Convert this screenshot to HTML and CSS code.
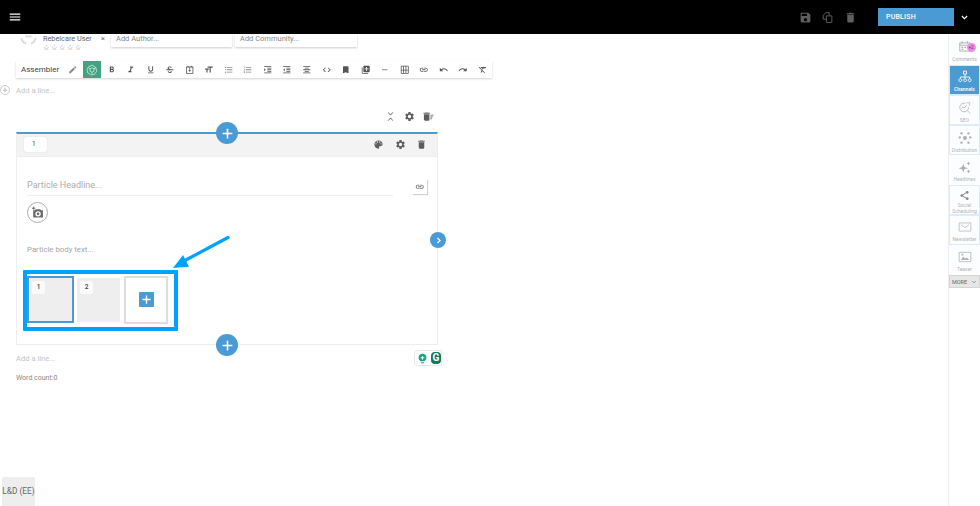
FILE: index.html
```html
<!DOCTYPE html>
<html lang="en">
<head>
<meta charset="utf-8">
<title>Assembler</title>
<link rel="stylesheet" href="styles.css">
</head>
<body>
<svg class="sprite" width="0" height="0" aria-hidden="true">
  <symbol id="i-menu" viewBox="0 0 24 24"><path d="M3 18h18v-2H3v2zm0-5h18v-2H3v2zm0-7v2h18V6H3z"/></symbol>
  <symbol id="i-save" viewBox="0 0 24 24"><path d="M17 3H5c-1.11 0-2 .9-2 2v14c0 1.1.89 2 2 2h14c1.1 0 2-.9 2-2V7l-4-4zm-5 16c-1.66 0-3-1.34-3-3s1.34-3 3-3 3 1.34 3 3-1.34 3-3 3zm3-10H5V5h10v4z"/></symbol>
  <symbol id="i-delete" viewBox="0 0 24 24"><path d="M6 19c0 1.1.9 2 2 2h8c1.1 0 2-.9 2-2V7H6v12zM19 4h-3.5l-1-1h-5l-1 1H5v2h14V4z"/></symbol>
  <symbol id="i-gear" viewBox="0 0 24 24"><path d="M19.14 12.94c.04-.3.06-.61.06-.94 0-.32-.02-.64-.07-.94l2.03-1.58c.18-.14.23-.41.12-.61l-1.92-3.32c-.12-.22-.37-.29-.59-.22l-2.39.96c-.5-.38-1.03-.7-1.62-.94l-.36-2.54c-.04-.24-.24-.41-.48-.41h-3.84c-.24 0-.43.17-.47.41l-.36 2.54c-.59.24-1.13.57-1.62.94l-2.39-.96c-.22-.08-.47 0-.59.22L2.74 8.87c-.12.21-.08.47.12.61l2.03 1.58c-.05.3-.09.63-.09.94s.02.64.07.94l-2.03 1.58c-.18.14-.23.41-.12.61l1.92 3.32c.12.22.37.29.59.22l2.39-.96c.5.38 1.03.7 1.62.94l.36 2.54c.05.24.24.41.48.41h3.84c.24 0 .44-.17.47-.41l.36-2.54c.59-.24 1.13-.56 1.62-.94l2.39.96c.22.08.47 0 .59-.22l1.92-3.32c.12-.22.07-.47-.12-.61l-2.01-1.58zM12 15.6c-1.98 0-3.6-1.62-3.6-3.6s1.62-3.6 3.6-3.6 3.6 1.62 3.6 3.6-1.62 3.6-3.6 3.6z"/></symbol>
  <symbol id="i-palette" viewBox="0 0 24 24"><path d="M12 3c-4.97 0-9 4.03-9 9s4.03 9 9 9c.83 0 1.5-.67 1.5-1.5 0-.39-.15-.74-.39-1.01-.23-.26-.38-.61-.38-.99 0-.83.67-1.5 1.5-1.5H16c2.76 0 5-2.24 5-5 0-4.42-4.03-8-9-8zm-5.5 9c-.83 0-1.5-.67-1.5-1.5S5.67 9 6.5 9 8 9.67 8 10.5 7.33 12 6.5 12zm3-4C8.67 8 8 7.33 8 6.5S8.67 5 9.5 5s1.5.67 1.5 1.5S10.33 8 9.5 8zm5 0c-.83 0-1.5-.67-1.5-1.5S13.67 5 14.5 5s1.5.67 1.5 1.5S15.33 8 14.5 8zm3 4c-.83 0-1.5-.67-1.5-1.5S16.67 9 17.5 9s1.5.67 1.5 1.5-.67 1.5-1.5 1.5z"/></symbol>
  <symbol id="i-link" viewBox="0 0 24 24"><path d="M3.9 12c0-1.71 1.39-3.1 3.1-3.1h4V7H7c-2.76 0-5 2.24-5 5s2.24 5 5 5h4v-1.9H7c-1.71 0-3.1-1.39-3.1-3.1zM8 13h8v-2H8v2zm9-6h-4v1.9h4c1.71 0 3.1 1.39 3.1 3.1s-1.39 3.1-3.1 3.1h-4V17h4c2.76 0 5-2.24 5-5s-2.24-5-5-5z"/></symbol>
  <symbol id="i-edit" viewBox="0 0 24 24"><path d="M3 17.25V21h3.75L17.81 9.94l-3.75-3.75L3 17.25zM20.71 7.04a1 1 0 0 0 0-1.41l-2.34-2.34a1 1 0 0 0-1.41 0l-1.83 1.83 3.75 3.75 1.83-1.83z"/></symbol>
  <symbol id="i-bold" viewBox="0 0 24 24"><path d="M15.6 10.79c.97-.67 1.65-1.77 1.65-2.79 0-2.26-1.75-4-4-4H7v14h7.04c2.09 0 3.71-1.7 3.71-3.79 0-1.52-.86-2.82-2.15-3.42zM10 6.5h3c.83 0 1.5.67 1.5 1.5s-.67 1.5-1.5 1.5h-3v-3zm3.5 9H10v-3h3.5c.83 0 1.5.67 1.5 1.5s-.67 1.5-1.5 1.5z"/></symbol>
  <symbol id="i-italic" viewBox="0 0 24 24"><path d="M10 4v3h2.21l-3.42 8H6v3h8v-3h-2.21l3.42-8H18V4z"/></symbol>
  <symbol id="i-underline" viewBox="0 0 24 24"><path d="M12 17c3.31 0 6-2.69 6-6V3h-2.5v8c0 1.93-1.57 3.5-3.5 3.5S8.5 12.93 8.5 11V3H6v8c0 3.31 2.69 6 6 6zm-7 2v2h14v-2H5z"/></symbol>
  <symbol id="i-strike" viewBox="0 0 24 24"><path d="M17 6.500C16 4.500 14 3.500 12 3.500c-3 0-5.500 1.500-5.500 4.300 0 1.500.8 2.700 2.200 3.200H3v2h18v-2h-6.500c-2-.6-5.200-1-5.200-3.200 0-1.300 1.200-2.100 2.700-2.100 1.300 0 2.500.6 3.100 2zM7 16c.6 3 2.800 4.500 5.200 4.500 3 0 5.300-1.500 5.300-4.500h-2.700c0 1.500-1.200 2.200-2.600 2.200-1.300 0-2.500-.8-2.800-2.200z"/></symbol>
  <symbol id="i-box" viewBox="0 0 24 24"><path d="M3 4h4V2h2v2h6V2h2v2h4v18H3V4zm2 2v14h14V6H5zm6 1h2v6h3l-4 4-4-4h3V7z"/></symbol>
  <symbol id="i-size" viewBox="0 0 24 24"><path d="M9 4v3h5v12h3V7h5V4H9zm-6 8h3v7h3v-7h3V9H3v3z"/></symbol>
  <symbol id="i-ul" viewBox="0 0 24 24"><path d="M4 10.5c-.83 0-1.5.67-1.5 1.5s.67 1.5 1.5 1.5 1.5-.67 1.5-1.5-.67-1.5-1.5-1.5zm0-6c-.83 0-1.5.67-1.5 1.5S3.17 7.5 4 7.5 5.5 6.83 5.5 6 4.83 4.5 4 4.5zm0 12c-.83 0-1.5.68-1.5 1.5s.68 1.5 1.5 1.5 1.5-.68 1.5-1.5-.67-1.5-1.5-1.5zM7 19h14v-2H7v2zm0-6h14v-2H7v2zm0-8v2h14V5H7z"/></symbol>
  <symbol id="i-ol" viewBox="0 0 24 24"><path d="M2 17h2v.5H3v1h1v.5H2v1h3v-4H2v1zm1-9h1V4H2v1h1v3zm-1 3h1.8L2 13.1v.9h3v-1H3.2L5 10.9V10H2v1zm5-6v2h14V5H7zm0 14h14v-2H7v2zm0-6h14v-2H7v2z"/></symbol>
  <symbol id="i-indent" viewBox="0 0 24 24"><path d="M3 21h18v-2H3v2zM3 8v8l4-4-4-4zm8 9h10v-2H11v2zM3 3v2h18V3H3zm8 6h10V7H11v2zm0 4h10v-2H11v2z"/></symbol>
  <symbol id="i-outdent" viewBox="0 0 24 24"><path d="M11 17h10v-2H11v2zm-8-5l4 4V8l-4 4zm0 9h18v-2H3v2zM3 3v2h18V3H3zm8 6h10V7H11v2zm0 4h10v-2H11v2z"/></symbol>
  <symbol id="i-center" viewBox="0 0 24 24"><path d="M3 3h18v2H3zM3 19h18v2H3zM3 11h18v2H3zM7 7h10v2H7zM7 15h10v2H7z"/></symbol>
  <symbol id="i-code" viewBox="0 0 24 24"><path d="M9.4 16.6L4.8 12l4.6-4.6L8 6l-6 6 6 6 1.4-1.4zm5.2 0l4.6-4.6-4.6-4.6L16 6l6 6-6 6-1.4-1.4z"/></symbol>
  <symbol id="i-bookmark" viewBox="0 0 24 24"><path d="M17 3H7c-1.1 0-1.99.9-1.99 2L5 21l7-3 7 3V5c0-1.1-.9-2-2-2z"/></symbol>
  <symbol id="i-library" viewBox="0 0 24 24"><path d="M4 6H2v14c0 1.1.9 2 2 2h14v-2H4V6zm16-4H8c-1.1 0-2 .9-2 2v12c0 1.1.9 2 2 2h12c1.1 0 2-.9 2-2V4c0-1.1-.9-2-2-2zm-1 9h-4v4h-2v-4H9V9h4V5h2v4h4v2z"/></symbol>
  <symbol id="i-minus" viewBox="0 0 24 24"><path d="M19 13H5v-2h14v2z"/></symbol>
  <symbol id="i-table" viewBox="0 0 24 24"><path d="M20 2H4c-1.1 0-2 .9-2 2v16c0 1.1.9 2 2 2h16c1.1 0 2-.9 2-2V4c0-1.1-.9-2-2-2zM8 20H4v-6h4v6zm0-8H4V4h4v8zm6 8h-4v-6h4v6zm0-8h-4V4h4v8zm6 8h-4v-6h4v6zm0-8h-4V4h4v8z"/></symbol>
  <symbol id="i-undo" viewBox="0 0 24 24"><path d="M12.5 8c-2.65 0-5.05.99-6.9 2.6L2 7v9h9l-3.62-3.62c1.39-1.16 3.16-1.88 5.12-1.88 3.54 0 6.55 2.31 7.6 5.5l2.37-.78C21.08 11.03 17.15 8 12.5 8z"/></symbol>
  <symbol id="i-redo" viewBox="0 0 24 24"><path d="M18.4 10.6C16.55 8.99 14.15 8 11.5 8c-4.65 0-8.58 3.03-9.96 7.22L3.9 16c1.05-3.19 4.05-5.5 7.6-5.5 1.95 0 3.73.72 5.12 1.88L13 16h9V7l-3.6 3.6z"/></symbol>
  <symbol id="i-clear" viewBox="0 0 24 24"><path d="M3.27 5L2 6.27l6.97 6.97L6.5 19h3l1.57-3.66L16.73 21 18 19.73 3.55 5.27 3.27 5zM6 5v.18L8.82 8h2.4l-.72 1.68 2.1 2.1L14.21 8H20V5H6z"/></symbol>
  <symbol id="i-copy" viewBox="0 0 24 24"><path fill="none" stroke="currentColor" stroke-width="1.8" d="M9 15H4V8l5-5h6v5M10 9h10v12H10z"/></symbol>
  <symbol id="i-collapse" viewBox="0 0 24 24"><path fill="none" stroke="currentColor" stroke-width="2" d="M7 3l5 6 5-6M7 21l5-6 5 6"/></symbol>
  <symbol id="i-delete-list" viewBox="0 0 24 24"><path d="M2 19c0 1.1.9 2 2 2h8c1.1 0 2-.9 2-2V7H2v12zM15 4h-3.5l-1-1h-5l-1 1H1v2h14V4zM16 8h7v2h-7zM16 12h5v2h-5zM16 16h3v2h-3z"/></symbol>
  <symbol id="i-plus" viewBox="0 0 24 24"><path d="M10.5 3h3v7.500H21v3h-7.500V21h-3v-7.500H3v-3h7.500z"/></symbol>
  <symbol id="i-chev-down" viewBox="0 0 24 24"><path fill="none" stroke="currentColor" stroke-width="3" d="M5 8l7 7 7-7"/></symbol>
  <symbol id="i-chev-right" viewBox="0 0 24 24"><path fill="none" stroke="currentColor" stroke-width="3.500" d="M9 5l7 7-7 7"/></symbol>
  <symbol id="i-camera" viewBox="0 0 24 24"><path d="M9 6l-1.500 2H4v13h18V8h-3.500L17 6zm4 3.500a5 5 0 1 1 0 10 5 5 0 0 1 0-10zm0 2.500a2.500 2.500 0 1 0 0 5 2.500 2.500 0 0 0 0-5zM4 1h2v2h2v2H6v2H4V5H2V3h2z"/></symbol>
  <symbol id="i-calendar" viewBox="0 0 24 24"><path fill="none" stroke="currentColor" stroke-width="1.600" d="M3 5h18v14H3zM3 9h18M7 2v4M16 2v4"/><path d="M6 11.500h3v2H6zM11 11.500h3v2h-3zM6 15h3v2H6z"/></symbol>
  <symbol id="i-channels" viewBox="0 0 24 24"><path fill="none" stroke="currentColor" stroke-width="1.500" d="M9.500 2h5v5h-5zM12 7v5M4 12h16v3M4 12v3M12 12v3M4 15a2.500 2.500 0 1 0 .01 0zM12 15a2.500 2.500 0 1 0 .01 0zM20 15a2.500 2.500 0 1 0 .01 0z"/></symbol>
  <symbol id="i-seo" viewBox="0 0 24 24"><path fill="none" stroke="currentColor" stroke-width="1.300" d="M18 10.500A7.500 7.500 0 1 1 13 4M15.800 16l5.200 5.500M6 13l3-3 2 2 4-5M15 3h5v5"/></symbol>
  <symbol id="i-distribution" viewBox="0 0 24 24"><circle cx="12" cy="12" r="3.500"/><circle cx="3" cy="11" r="2"/><circle cx="21" cy="11" r="2"/><circle cx="6" cy="4" r="2"/><circle cx="18" cy="4" r="2"/><circle cx="6" cy="20" r="2"/><circle cx="18" cy="20" r="2"/></symbol>
  <symbol id="i-sparkle" viewBox="0 0 24 24"><path d="M9 6l2 6 6 2-6 2-2 6-2-6-6-2 6-2zM18 2l1 3 3 1-3 1-1 3-1-3-3-1 3-1zM18 16l1 2.500 2.500 1-2.500 1-1 2.500-1-2.500-2.500-1 2.500-1z"/></symbol>
  <symbol id="i-share" viewBox="0 0 24 24"><path d="M18 16.080c-.76 0-1.440.3-1.960.77L8.910 12.700c.05-.23.090-.46.090-.7s-.04-.47-.09-.7l7.050-4.110c.54.5 1.250.81 2.040.81 1.660 0 3-1.340 3-3s-1.340-3-3-3-3 1.340-3 3c0 .24.040.47.090.7L8.040 9.810C7.500 9.310 6.790 9 6 9c-1.660 0-3 1.340-3 3s1.340 3 3 3c.79 0 1.500-.31 2.040-.81l7.120 4.160c-.05.21-.08.43-.08.65 0 1.610 1.310 2.920 2.920 2.920s2.920-1.310 2.920-2.920-1.310-2.920-2.920-2.920z"/></symbol>
  <symbol id="i-mail" viewBox="0 0 24 24"><path fill="none" stroke="currentColor" stroke-width="1.200" d="M2 5h20v14H2zM5 8l7 5 7-5"/></symbol>
  <symbol id="i-image" viewBox="0 0 24 24"><path fill="none" stroke="currentColor" stroke-width="1.300" d="M2 4h20v16H2z"/><path d="M5 17l4-6 3 4 3-2 4 4zM6 6.500h3v3H6z"/></symbol>
  <symbol id="i-gpt" viewBox="0 0 24 24"><path fill="none" stroke="currentColor" stroke-width="1.500" d="M12 2.500a4.500 4.500 0 0 1 4.500 3.200 4.500 4.500 0 0 1 4 5.300 4.500 4.500 0 0 1-1.500 6.500 4.500 4.500 0 0 1-5.500 3.500 4.500 4.500 0 0 1-6.500-1.500 4.500 4.500 0 0 1-4-5.500 4.500 4.500 0 0 1 1-6.500 4.500 4.500 0 0 1 5-3.500zM12 7.500l4 2.200v4.600l-4 2.200-4-2.200V9.700zM8 9.700L4.500 7.500M16 9.700l3.500-2.200M12 16.500v4"/></symbol>
  <symbol id="i-bulb" viewBox="0 0 24 24"><path d="M12 1.500a8.500 8.500 0 0 0-4.500 15.700V18h9v-.8A8.500 8.500 0 0 0 12 1.500zm-1 5h2v3h3v2h-3v3h-2v-3H8v-2h3zM8.500 20h7v2.500h-7z"/></symbol>
  <symbol id="i-avatar" viewBox="0 0 24 24"><path fill="none" stroke="currentColor" stroke-width="2.500" d="M4 8a9 9 0 0 1 8-5M20 8a9 9 0 0 0-6-5M3 14a9 9 0 0 0 6 7M21 14a9 9 0 0 1-6 7M8 12l8 0"/></symbol>
</svg>

<header class="topbar">
  <svg class="ico ico-menu"><use href="#i-menu"/></svg>
  <div class="top-actions">
    <svg class="ico ico-top"><use href="#i-save"/></svg>
    <svg class="ico ico-top"><use href="#i-copy"/></svg>
    <svg class="ico ico-top"><use href="#i-delete"/></svg>
    <button class="publish">PUBLISH</button>
    <svg class="ico ico-chev"><use href="#i-chev-down"/></svg>
  </div>
</header>

<div class="layout">
  <main class="editor">
    <div class="meta">
      <svg class="ico avatar"><use href="#i-avatar"/></svg>
      <div class="author">
        <span class="author-name">Rebelcare User</span>
        <span class="stars">☆☆☆☆☆</span>
      </div>
      <span class="author-x">×</span>
      <div class="meta-field meta-author">Add Author...</div>
      <div class="meta-field meta-community">Add Community...</div>
    </div>

    <div class="toolbar">
      <span class="tb-title">Assembler</span>
      <span class="tb-btn tb-edit"><svg class="ico ico-tb ico-light"><use href="#i-edit"/></svg></span>
      <span class="tb-btn tb-gpt"><svg class="ico ico-gpt"><use href="#i-gpt"/></svg></span>
      <span class="tb-btn"><svg class="ico ico-tb"><use href="#i-bold"/></svg></span>
      <span class="tb-btn"><svg class="ico ico-tb"><use href="#i-italic"/></svg></span>
      <span class="tb-btn"><svg class="ico ico-tb"><use href="#i-underline"/></svg></span>
      <span class="tb-btn"><svg class="ico ico-tb"><use href="#i-strike"/></svg></span>
      <span class="tb-btn"><svg class="ico ico-tb"><use href="#i-box"/></svg></span>
      <span class="tb-btn"><svg class="ico ico-tb"><use href="#i-size"/></svg></span>
      <span class="tb-btn"><svg class="ico ico-tb ico-light"><use href="#i-ul"/></svg></span>
      <span class="tb-btn"><svg class="ico ico-tb ico-light"><use href="#i-ol"/></svg></span>
      <span class="tb-btn"><svg class="ico ico-tb"><use href="#i-indent"/></svg></span>
      <span class="tb-btn"><svg class="ico ico-tb"><use href="#i-outdent"/></svg></span>
      <span class="tb-btn"><svg class="ico ico-tb"><use href="#i-center"/></svg></span>
      <span class="tb-btn"><svg class="ico ico-tb"><use href="#i-code"/></svg></span>
      <span class="tb-btn"><svg class="ico ico-tb"><use href="#i-bookmark"/></svg></span>
      <span class="tb-btn"><svg class="ico ico-tb"><use href="#i-library"/></svg></span>
      <span class="tb-btn"><svg class="ico ico-tb ico-light"><use href="#i-minus"/></svg></span>
      <span class="tb-btn"><svg class="ico ico-tb"><use href="#i-table"/></svg></span>
      <span class="tb-btn"><svg class="ico ico-tb"><use href="#i-link"/></svg></span>
      <span class="tb-btn"><svg class="ico ico-tb"><use href="#i-undo"/></svg></span>
      <span class="tb-btn"><svg class="ico ico-tb"><use href="#i-redo"/></svg></span>
      <span class="tb-btn"><svg class="ico ico-tb"><use href="#i-clear"/></svg></span>
    </div>

    <div class="add-line add-line-top">
      <span class="add-circle"><svg class="ico ico-add"><use href="#i-plus"/></svg></span>
      <span>Add a line...</span>
    </div>

    <div class="block-actions">
      <svg class="ico ico-block"><use href="#i-collapse"/></svg>
      <svg class="ico ico-block"><use href="#i-gear"/></svg>
      <svg class="ico ico-block"><use href="#i-delete-list"/></svg>
    </div>

    <section class="card">
      <span class="round-plus round-plus-top"><svg class="ico ico-plus"><use href="#i-plus"/></svg></span>
      <div class="card-head">
        <span class="index-badge">1</span>
        <div class="card-head-actions">
          <svg class="ico ico-block"><use href="#i-palette"/></svg>
          <svg class="ico ico-block"><use href="#i-gear"/></svg>
          <svg class="ico ico-block"><use href="#i-delete"/></svg>
        </div>
      </div>
      <div class="card-body">
        <div class="headline-row">
          <div class="headline">Particle Headline...</div>
          <span class="link-box"><svg class="ico ico-tb"><use href="#i-link"/></svg></span>
        </div>
        <span class="camera"><svg class="ico ico-camera"><use href="#i-camera"/></svg></span>
        <p class="body-text">Particle body text...</p>
        <div class="thumbs">
          <div class="thumb thumb-active"><span class="thumb-num">1</span></div>
          <div class="thumb"><span class="thumb-num">2</span></div>
          <div class="thumb-add"><span class="thumb-add-btn"><svg class="ico ico-plus-sm"><use href="#i-plus"/></svg></span></div>
        </div>
      </div>
      <span class="next-btn"><svg class="ico ico-next"><use href="#i-chev-right"/></svg></span>
      <span class="round-plus round-plus-bottom"><svg class="ico ico-plus"><use href="#i-plus"/></svg></span>
      <div class="highlight"></div>
      <svg class="arrow" viewBox="0 0 64 40"><path d="M57 1.500L13 25" fill="none" stroke="#00a2ff" stroke-width="3.200" stroke-linecap="round"/><path d="M2 32L12 19 18 30.700z" fill="#00a2ff"/></svg>
    </section>

    <div class="add-line add-line-bottom">
      <span>Add a line...</span>
      <div class="grammarly">
        <svg class="ico ico-bulb"><use href="#i-bulb"/></svg>
        <span class="g-mark">G</span>
      </div>
    </div>
    <div class="word-count">Word count:0</div>

    <div class="locale">L&amp;D (EE)</div>
  </main>

  <aside class="side">
    <div class="side-item"><span class="side-icon-wrap"><svg class="ico ico-side"><use href="#i-calendar"/></svg><span class="pink-dot">+2</span></span><span>Comments</span></div>
    <div class="side-item side-active"><svg class="ico ico-side"><use href="#i-channels"/></svg><span>Channels</span></div>
    <div class="side-item side-lined"><svg class="ico ico-side"><use href="#i-seo"/></svg><span>SEO</span></div>
    <div class="side-item side-lined"><svg class="ico ico-side"><use href="#i-distribution"/></svg><span>Distribution</span></div>
    <div class="side-item"><svg class="ico ico-side"><use href="#i-sparkle"/></svg><span>Headlines</span></div>
    <div class="side-item side-lined side-two"><svg class="ico ico-side-sm"><use href="#i-share"/></svg><span>Social Scheduling</span></div>
    <div class="side-item side-lined side-news"><svg class="ico ico-side"><use href="#i-mail"/></svg><span>Newsletter</span></div>
    <div class="side-item"><svg class="ico ico-side"><use href="#i-image"/></svg><span>Teaser</span></div>
    <div class="side-more"><span>MORE</span><svg class="ico ico-more"><use href="#i-chev-down"/></svg></div>
  </aside>
</div>
</body>
</html>
```
FILE: styles.css
```css
* { box-sizing: border-box; }
html, body { margin: 0; height: 506px; overflow: hidden; }
body { background: #fff; font-family: Roboto, "Liberation Sans", sans-serif; color: #555; }
.sprite { position: absolute; }
.ico { display: block; fill: currentColor; flex: none; }

.topbar { height: 34px; background: #000; display: flex; align-items: center; justify-content: space-between; padding: 0 11px 0 8px; }
.ico-menu { width: 14px; height: 14px; color: #fff; }
.top-actions { display: flex; align-items: center; }
.ico-top { width: 13px; height: 13px; color: #5e5e5e; margin-right: 9.500px; }
.publish { width: 76px; height: 18px; margin-left: 12px; padding: 0 0 0 8px; border: 0; background: #4a9ad4; color: #fff; font: 500 7px Roboto, sans-serif; text-align: left; letter-spacing: .2px; }
.ico-chev { width: 9px; height: 9px; color: #fff; margin-left: 6px; }

.layout { display: flex; height: 472px; }
.editor { position: relative; width: 948px; display: flex; flex-direction: column; }
.side { width: 32px; border-left: 1px solid #eee; padding-top: 1px; background: #fff; }

.meta { display: flex; height: 27px; margin-left: 19px; overflow: hidden; }
.avatar { width: 19px; height: 19px; margin-top: -7px; color: #dcdcdc; }
.author { margin-left: 5px; width: 51px; display: flex; flex-direction: column; font-size: 7.300px; line-height: 9px; flex: none; color: #666; }
.stars { font: 7.500px/9px "DejaVu Sans", sans-serif; letter-spacing: 1.200px; color: #777; }
.author-x { width: 12px; font-size: 8px; line-height: 9px; color: #777; flex: none; text-align: center; margin-left: 3px; }
.meta-field { height: 12.500px; padding-left: 5px; font-size: 7.500px; line-height: 9px; color: #888; box-shadow: 0 1px 2px rgba(0,0,0,.2); }
.meta-author { width: 121px; margin-left: 2px; }
.meta-community { width: 122px; margin-left: 3px; }

.toolbar { width: 476px; height: 17px; margin-left: 16px; display: flex; align-items: center; box-shadow: 0 1px 2px rgba(0,0,0,.18); flex: none; }
.tb-title { width: 47px; padding-left: 5px; font-size: 8px; color: #444; flex: none; }
.tb-btn { width: 19.550px; height: 17px; display: flex; align-items: center; justify-content: center; flex: none; color: #555; }
.tb-edit { width: 20px; }
.tb-gpt { width: 18px; background: #43a27f; color: #d7eee5; margin-right: .500px; }
.ico-tb { width: 9.500px; height: 9.500px; }
.ico-gpt { width: 12px; height: 12px; }
.ico-light { color: #8b8b8b; }

.add-line { font-size: 7.600px; color: #c4c4c4; display: flex; align-items: center; }
.add-line-top { height: 12px; margin-top: 6px; gap: 6px; }
.add-circle { width: 10px; height: 10px; border: 1px solid #ccc; border-radius: 50%; display: flex; align-items: center; justify-content: center; color: #aaa; flex: none; }
.ico-add { width: 6px; height: 6px; }
.block-actions { height: 16px; margin-top: 12px; width: 438px; padding-right: 4px; display: flex; justify-content: flex-end; align-items: center; gap: 8px; flex: none; }
.ico-block { width: 11px; height: 11px; color: #5c5c5c; }

.card { position: relative; width: 422px; height: 213px; margin: 8px 0 0 16px; border: 1px solid #eee; border-top: 2px solid #4a9ad4; flex: none; }
.card-head { height: 23px; background: #f3f3f3; border-bottom: 1px solid #eee; display: flex; align-items: center; justify-content: space-between; padding: 0 10px 2px 7px; }
.index-badge { width: 23px; height: 15px; background: #fff; border-radius: 2px; box-shadow: 0 0 1px rgba(0,0,0,.2); font-size: 6.500px; line-height: 15px; padding-left: 8px; color: #444; }
.card-head-actions { display: flex; gap: 10.500px; }
.card-body { padding: 0 10px; }
.headline-row { display: flex; align-items: flex-end; height: 39px; }
.headline { width: 366px; height: 19px; font-size: 9px; line-height: 16px; color: #adadad; border-bottom: 1px solid #eee; }
.link-box { width: 15px; height: 15px; margin: 0 0 2px 19px; display: flex; align-items: center; justify-content: center; box-shadow: 1px 1px 1px rgba(0,0,0,.18); color: #666; }
.camera { display: flex; align-items: center; justify-content: center; width: 21px; height: 21px; margin-top: 6px; border: 1px solid #aaa; border-radius: 50%; color: #6b6b6b; }
.ico-camera { width: 13px; height: 13px; }
.body-text { margin: 21px 0 0; height: 12px; font-size: 7.800px; line-height: 12px; color: #a5a5a5; }
.thumbs { display: flex; align-items: center; margin-top: 20px; height: 47px; }
.thumb { position: relative; width: 43px; height: 44px; background: #eee; margin-right: 3px; flex: none; }
.thumb-active { width: 47px; height: 47px; margin-right: 3px; border: 2px solid #4a9ad4; }
.thumb-num { position: absolute; top: 3px; left: 3px; width: 13px; height: 13px; background: #fafafa; border-radius: 2px; font-size: 6.500px; font-weight: 500; line-height: 13px; text-align: center; color: #444; }
.thumb-add { width: 44px; height: 48px; margin-left: 1px; border: 2px solid #ddd; display: flex; align-items: center; justify-content: center; flex: none; }
.thumb-add-btn { width: 15px; height: 15px; background: #4a9ad4; border-radius: 1px; color: #fff; display: flex; align-items: center; justify-content: center; }
.ico-plus-sm { width: 11px; height: 11px; }

.round-plus { position: absolute; left: 199px; width: 22px; height: 22px; border-radius: 50%; background: #4a9ad4; color: #fff; display: flex; align-items: center; justify-content: center; z-index: 2; }
.round-plus-top { top: -12px; }
.round-plus-bottom { bottom: -12px; }
.ico-plus { width: 13px; height: 13px; }
.next-btn { position: absolute; top: 98px; left: 413px; width: 16px; height: 16px; border-radius: 50%; background: #4a9ad4; color: #fff; display: flex; align-items: center; justify-content: center; }
.ico-next { width: 9px; height: 9px; }
.highlight { position: absolute; left: 6px; top: 136px; width: 155px; height: 61px; border: 4px solid #00a2ff; border-radius: 1px; }
.arrow { position: absolute; left: 154px; top: 102px; width: 64px; height: 40px; }

.add-line-bottom { position: relative; height: 13px; margin: 7px 0 0 16px; width: 426px; flex: none; }
.grammarly { position: absolute; right: 0; top: -2px; width: 28px; height: 16px; background: #fff; border: 1px solid #e4e8e8; border-radius: 4px 0 0 4px; display: flex; align-items: center; padding-left: 2px; gap: 3px; }
.ico-bulb { width: 11px; height: 11px; color: #11a683; }
.g-mark { width: 12px; height: 12px; border-radius: 4px; background: #0e7a63; color: #fff; font-size: 10px; font-weight: 700; line-height: 12px; text-align: center; }
.word-count { margin: 7px 0 0 16px; font-size: 7px; line-height: 12px; color: #888; }
.locale { margin: auto 0 0 2px; width: 33px; height: 29px; background: #eee; border-radius: 2px 2px 0 0; font-size: 8.300px; line-height: 29px; color: #666; text-align: center; white-space: nowrap; flex: none; }

.side-item { height: 30px; padding-top: 5px; display: flex; flex-direction: column; align-items: center; justify-content: flex-start; gap: 2px; font-size: 5px; line-height: 6px; color: #b5b5b5; text-align: center; background: #fbfdfe; }
.side-active { background: #4a9ad4; color: #fff; font-weight: 500; border: 1px solid #d9eaf6; padding-top: 4px; }
.side-lined { border: 1px solid #dcebf6; }
.side-two { padding-top: 4px; gap: 1px; }
.side-news { padding-top: 4px; }
.side-icon-wrap { position: relative; display: block; }
.ico-side { width: 14px; height: 14px; color: #b0b0b0; }
.ico-side-sm { width: 11px; height: 11px; color: #888; }
.side-active .ico-side { color: #fff; }
.pink-dot { position: absolute; right: -4px; top: 3px; width: 9px; height: 9px; border-radius: 50%; background: #f48be0; font-size: 4.500px; line-height: 9px; color: #444; }
.side-more { height: 13px; display: flex; align-items: center; justify-content: center; gap: 4px; background: #e6e6e6; border: 1px solid #d5d5d5; font-size: 5.500px; color: #666; }
.ico-more { width: 6px; height: 6px; color: #777; }
```
